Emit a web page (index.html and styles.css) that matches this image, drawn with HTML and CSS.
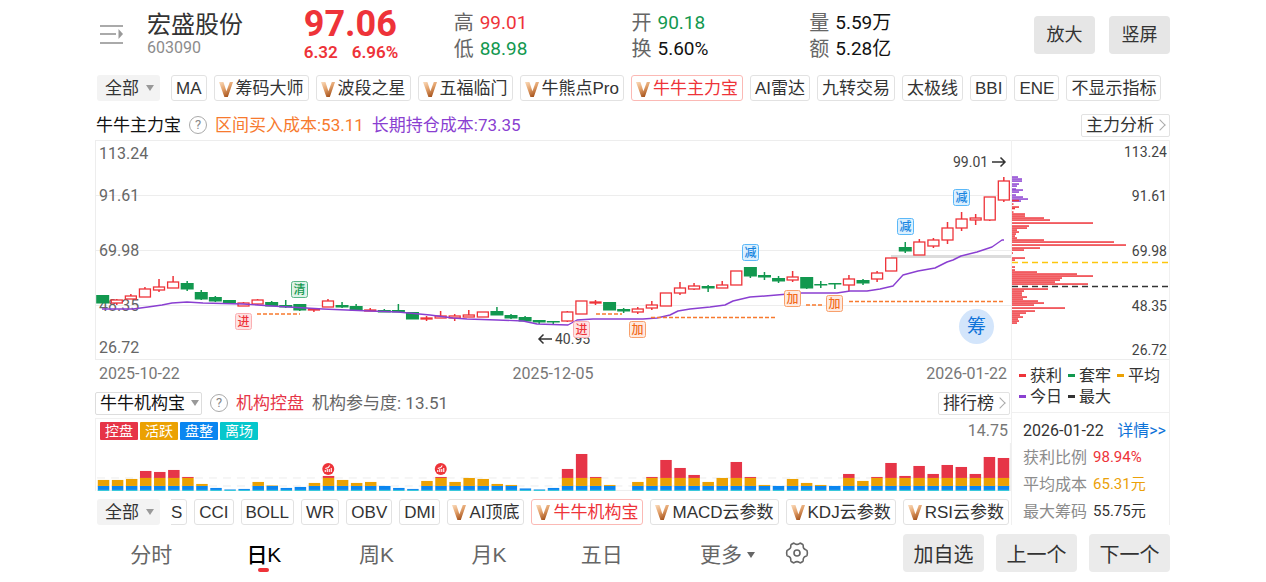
FILE: index.html
```html
<!DOCTYPE html>
<html lang="zh-CN">
<head>
    <meta charset="UTF-8">
    <meta name="viewport" content="width=device-width, initial-scale=1.0">
    <title>宏盛股份 603090</title>
    <link rel="stylesheet" href="styles.css">
</head>
<body>
    <svg class="defs" width="0" height="0" aria-hidden="true">
        <defs>
            <linearGradient id="gold" x1="0" y1="0" x2="0.5" y2="1">
                <stop offset="0" stop-color="#fbdcbc"/>
                <stop offset="0.5" stop-color="#e3a26c"/>
                <stop offset="1" stop-color="#a8561f"/>
            </linearGradient>
            <symbol id="vip" viewBox="0 0 14 15">
                <path d="M0 0h4.4l3 9.2L10.8 0H14L8.8 15H5.4z" fill="url(#gold)"/>
            </symbol>
        </defs>
    </svg>

    <div class="page">
        <header class="header">
            <button class="menu-button" aria-label="列表">
                <svg width="24" height="20" viewBox="0 0 24 20" stroke="#aaa" stroke-width="2">
                    <path d="M0 2h23M0 10h16M0 19h23"/>
                    <path d="M18.5 5v10l4.500-5z" fill="#999" stroke="none"/>
                </svg>
            </button>
            <div class="stock">
                <h1>宏盛股份</h1>
                <p>603090</p>
            </div>
            <div class="price">
                <strong>97.06</strong>
                <p><span>6.32</span><span>6.96%</span></p>
            </div>
            <dl class="stats">
                <div><dt>高</dt><dd class="up">99.01</dd></div>
                <div><dt>低</dt><dd class="down">88.98</dd></div>
            </dl>
            <dl class="stats">
                <div><dt>开</dt><dd class="down">90.18</dd></div>
                <div><dt>换</dt><dd>5.60%</dd></div>
            </dl>
            <dl class="stats">
                <div><dt>量</dt><dd>5.59万</dd></div>
                <div><dt>额</dt><dd>5.28亿</dd></div>
            </dl>
            <div class="header-buttons">
                <button>放大</button>
                <button>竖屏</button>
            </div>
        </header>

        <div class="chips">
            <span class="select all"><select aria-label="主图指标分类"><option>全部</option></select></span>
            <div class="chip-list">
                <button class="chip">MA</button>
                <button class="chip"><svg><use href="#vip"/></svg>筹码大师</button>
                <button class="chip"><svg><use href="#vip"/></svg>波段之星</button>
                <button class="chip"><svg><use href="#vip"/></svg>五福临门</button>
                <button class="chip"><svg><use href="#vip"/></svg>牛熊点Pro</button>
                <button class="chip active"><svg><use href="#vip"/></svg>牛牛主力宝</button>
                <button class="chip">AI雷达</button>
                <button class="chip">九转交易</button>
                <button class="chip">太极线</button>
                <button class="chip">BBI</button>
                <button class="chip">ENE</button>
                <button class="chip">不显示指标</button>
            </div>
        </div>

        <div class="title-row">
            <span class="name">牛牛主力宝</span>
            <button class="help" aria-label="牛牛主力宝说明">?</button>
            <span class="orange">区间买入成本:53.11</span>
            <span class="purple">长期持仓成本:73.35</span>
            <a class="more-link" href="#">主力分析<i></i></a>
        </div>

        <main class="board">
            <section class="left">
                <div class="kline">
                    <svg id="kline" viewBox="-1 0 916 220"></svg>
                    <button class="chip-toggle">筹</button>
                </div>
                <div class="dates">
                    <time>2025-10-22</time>
                    <time>2025-12-05</time>
                    <time>2026-01-22</time>
                </div>

                <div class="sub-row">
                    <span class="select boxed"><select aria-label="副图指标"><option>牛牛机构宝</option></select></span>
                    <button class="help" aria-label="牛牛机构宝说明">?</button>
                    <span class="crimson">机构控盘</span>
                    <span class="grey">机构参与度: 13.51</span>
                    <a class="more-link" href="#">排行榜<i></i></a>
                </div>
                <div class="sub-chart">
                    <div class="sub-head">
                        <span class="tag tag-red">控盘</span>
                        <span class="tag tag-orange">活跃</span>
                        <span class="tag tag-blue">盘整</span>
                        <span class="tag tag-cyan">离场</span>
                        <span class="sub-max">14.75</span>
                    </div>
                    <svg id="volume" viewBox="-1 0 916 48"></svg>
                </div>

                <div class="chips bottom-chips">
                    <span class="select all"><select aria-label="副图指标分类"><option>全部</option></select></span>
                    <div class="chip-list scrolled">
                        <button class="chip">BIAS</button>
                        <button class="chip">CCI</button>
                        <button class="chip">BOLL</button>
                        <button class="chip">WR</button>
                        <button class="chip">OBV</button>
                        <button class="chip">DMI</button>
                        <button class="chip"><svg><use href="#vip"/></svg>AI顶底</button>
                        <button class="chip active"><svg><use href="#vip"/></svg>牛牛机构宝</button>
                        <button class="chip"><svg><use href="#vip"/></svg>MACD云参数</button>
                        <button class="chip"><svg><use href="#vip"/></svg>KDJ云参数</button>
                        <button class="chip"><svg><use href="#vip"/></svg>RSI云参数</button>
                    </div>
                </div>
            </section>

            <aside class="side">
                <svg id="cost" viewBox="0 0 157 220"></svg>
                <ul class="legend">
                    <li class="c-red">获利</li>
                    <li class="c-green">套牢</li>
                    <li class="c-orange">平均</li>
                    <li class="c-purple">今日</li>
                    <li class="c-black">最大</li>
                </ul>
                <div class="detail">
                    <p class="spread"><time>2026-01-22</time><a href="#">详情&gt;&gt;</a></p>
                    <p><span>获利比例</span><b class="up">98.94%</b></p>
                    <p><span>平均成本</span><b class="amber">65.31元</b></p>
                    <p><span>最大筹码</span><b>55.75元</b></p>
                </div>
            </aside>
        </main>

        <footer class="footer">
            <nav class="tabs">
                <button>分时</button>
                <button class="current">日K</button>
                <button>周K</button>
                <button>月K</button>
                <button>五日</button>
            </nav>
            <button class="more">更多<i></i></button>
            <button class="gear" aria-label="设置">
                <svg width="24" height="24" viewBox="0 0 24 24" fill="none" stroke="#666" stroke-width="1.6" stroke-linejoin="round">
                    <path d="M8.4 2.2C9.4 1.8 9.8 3.4 12 3.4s2.600-1.600 3.600-1.200l2.200 1.300c1 .8-.2 2 .9 3.700 1 1.600 2.900 1.300 3.300 2.400.4 1.300.4 3.500 0 4.800-.4 1.100-2.300.8-3.300 2.400-1.100 1.700.1 2.900-.9 3.700l-2.200 1.300c-1 .4-1.400-1.200-3.600-1.200s-2.600 1.600-3.600 1.200l-2.200-1.300c-1-.8.2-2-.9-3.700-1-1.600-2.900-1.300-3.300-2.400-.4-1.300-.4-3.500 0-4.800.4-1.100 2.300-.8 3.300-2.400 1.100-1.700-.1-2.900.9-3.700z"/>
                    <circle cx="12" cy="12" r="3"/>
                </svg>
            </button>
            <div class="actions">
                <button>加自选</button>
                <button>上一个</button>
                <button>下一个</button>
            </div>
        </footer>
    </div>

    <script src="script.js"></script>
</body>
</html>
```
FILE: styles.css
```css
* {
    box-sizing: border-box;
}
body {
    margin: 0;
    background: #fff;
    color: #333;
    font-family: Roboto, "Noto Sans CJK SC", sans-serif;
    font-size: 17px;
    line-height: 24px;
}
h1, p, dl, dd, ul {
    margin: 0;
    padding: 0;
}
button, select {
    margin: 0;
    padding: 0;
    border: none;
    background: none;
    color: inherit;
    font: inherit;
    cursor: pointer;
}
a {
    color: inherit;
    text-decoration: none;
}
svg {
    display: block;
}
.defs {
    position: absolute;
}
.page {
    padding: 0 96px 0 95px;
}
.up { color: #ee3339; }
.down { color: #12984f; }
.orange { color: #f77a2e; }
.purple { color: #8a3fd1; }
.crimson { color: #e63547; }
.grey { color: #666; }
.amber { color: #eba10a; }

/* header */
.header {
    display: grid;
    grid-template-columns: 52px 157fr 150fr 178fr 178fr 225fr auto;
    height: 75px;
}
.menu-button {
    align-self: start;
    padding: 24px 0 0 5px;
}
.stock {
    padding-top: 10px;
}
.stock h1 {
    font-size: 24px;
    font-weight: 400;
    line-height: 30px;
}
.stock p {
    color: #8c8c8c;
    font-size: 16px;
    line-height: 16px;
}
.price {
    padding-top: 6px;
    color: #ee3339;
}
.price strong {
    display: block;
    font-size: 36px;
    line-height: 36px;
}
.price p {
    display: flex;
    gap: 14px;
    font-weight: 600;
    line-height: 20px;
}
.stats {
    padding-top: 10px;
}
.stats div {
    display: flex;
    gap: 6px;
    font-size: 19px;
    line-height: 26px;
}
.stats dt {
    color: #666;
    font-size: 20px;
}
.stats dd {
    color: #111;
}
.stats .up { color: #ee3339; }
.stats .down { color: #12984f; }
.header-buttons {
    display: flex;
    align-items: flex-start;
    gap: 14px;
    padding-top: 16px;
}
.header-buttons button {
    width: 61px;
    height: 38px;
    border-radius: 4px;
    background: #e6e6e6;
    font-size: 18px;
}

/* indicator chips */
.chips {
    display: flex;
    gap: 11px;
    padding-left: 2px;
}
.chip-list {
    display: flex;
    flex: 1;
    gap: 7px;
    min-width: 0;
    overflow: hidden;
    font-family: "Liberation Sans", "Noto Sans CJK SC", sans-serif;
}
.chip-list.scrolled {
    justify-content: flex-end;
    padding-right: 2px;
}
.chip {
    display: flex;
    flex-shrink: 0;
    align-items: center;
    height: 26px;
    padding: 2px 4px 0;
    border: 1px solid #e2e2e2;
    border-radius: 3px;
    white-space: nowrap;
}
.chip svg {
    width: 14px;
    height: 15px;
    margin-right: 3px;
}
.chip.active {
    border-color: #fbb9b5;
    color: #ee3339;
}
.select {
    display: inline-flex;
    position: relative;
    align-items: center;
}
.select select {
    appearance: none;
    outline: none;
}
.select::after {
    content: "";
    position: absolute;
    right: 6px;
    border: 4px solid transparent;
    border-top: 6px solid #999;
    border-bottom: 0;
    pointer-events: none;
}
.all {
    height: 26px;
    border-radius: 3px;
    background: #f3f3f3;
}
.all select {
    padding: 0 21px 0 8px;
}
.boxed {
    height: 23px;
    border: 1px solid #ddd;
    border-radius: 2px;
    color: #111;
}
.boxed select {
    padding: 0 16px 0 4px;
}
.boxed::after {
    right: 2px;
}

/* title rows */
.title-row, .sub-row {
    display: flex;
    align-items: center;
    gap: 8px;
    height: 24px;
}
.title-row {
    margin: 12px 0 3px;
}
.name {
    padding-left: 1px;
    color: #111;
}
.help {
    width: 18px;
    height: 18px;
    border: 1px solid #aaa;
    border-radius: 50%;
    color: #888;
    font-size: 13px;
    line-height: 16px;
}
.more-link {
    display: flex;
    align-items: center;
    gap: 2px;
    height: 23px;
    margin-left: auto;
    padding: 0 5px 0 4px;
    border: 1px solid #e2e2e2;
    border-radius: 2px;
}
.more-link i {
    width: 8px;
    height: 8px;
    border: solid #aaa;
    border-width: 1px 1px 0 0;
    transform: rotate(45deg);
}

/* charts */
.board {
    display: grid;
    grid-template-columns: 916fr 159fr;
}
.left {
    min-width: 0;
}
.kline {
    position: relative;
}
.kline svg, .sub-chart svg, .side svg {
    width: 100%;
    height: auto;
}
.chip-toggle {
    position: absolute;
    right: 17px;
    bottom: 16px;
    width: 35px;
    height: 35px;
    border-radius: 50%;
    background: #d3e5fb;
    color: #0f73d8;
    font-size: 19px;
}
.axis {
    fill: #666;
    font-size: 16px;
}
.axis-small {
    fill: #444;
    font-size: 14px;
}
.mark {
    font-size: 12px;
    font-weight: 500;
    text-anchor: middle;
}
.dates {
    display: flex;
    justify-content: space-between;
    height: 31px;
    padding: 2px 4px 0;
    color: #777;
    font-size: 16px;
}
.sub-row {
    padding-right: 1px;
}
.sub-chart {
    margin-top: 3px;
    border: solid #f0f0f0;
    border-width: 1px 0 0 1px;
}
.sub-head {
    display: flex;
    align-items: center;
    gap: 2px;
    height: 24px;
    padding: 0 3px 0 4px;
}
.tag {
    padding: 0 5px;
    border-radius: 1px;
    color: #fff;
    font-size: 14px;
    line-height: 18px;
}
.tag-red { background: #e63547; }
.tag-orange { background: #eba103; }
.tag-blue { background: #0a86f0; }
.tag-cyan { background: #06c7cc; }
.sub-max {
    margin-left: auto;
    color: #777;
    font-size: 16px;
}
.bottom-chips {
    margin-top: 8px;
}

/* cost side panel */
.side {
    border-right: 1px solid #f0f0f0;
    border-left: 1px solid #f0f0f0;
    font-size: 16px;
}
.legend {
    display: grid;
    grid-template-columns: repeat(3, 49px);
    padding: 5px 0 5px 7px;
    border-bottom: 1px solid #f0f0f0;
    line-height: 21px;
    list-style: none;
}
.legend li {
    display: flex;
    align-items: center;
    gap: 4px;
    white-space: nowrap;
}
.legend li::before {
    content: "";
    width: 7px;
    height: 3px;
    background: #333;
}
.legend .c-red::before { background: #ee3339; }
.legend .c-green::before { background: #12984f; }
.legend .c-orange::before { background: #eba103; }
.legend .c-purple::before { background: #8a3fd1; }
.detail {
    padding: 4px 3px 0 11px;
    line-height: 27px;
}
.detail p {
    display: flex;
    gap: 6px;
}
.detail .spread {
    justify-content: space-between;
}
.detail a {
    color: #0f73d8;
}
.detail span {
    color: #8c8c8c;
}
.detail b {
    font-size: 15px;
    font-weight: 400;
}

/* bottom bar */
.footer {
    display: flex;
    align-items: center;
    margin-top: 9px;
    color: #666;
    font-family: "Liberation Sans", "Noto Sans CJK SC", sans-serif;
    font-size: 21px;
}
.tabs {
    display: grid;
    flex: 1;
    grid-template-columns: repeat(5, 1fr);
}
.tabs button {
    height: 38px;
    padding-top: 3px;
}
.tabs .current {
    position: relative;
    color: #000;
    font-weight: 500;
}
.current::after {
    content: "";
    position: absolute;
    bottom: 0;
    left: 50%;
    width: 11px;
    height: 4px;
    margin-left: -6px;
    border-radius: 2px;
    background: #ee3339;
}
.more {
    display: flex;
    align-items: center;
    gap: 5px;
    margin-left: 42px;
    padding-top: 3px;
}
.more i {
    border: 4px solid transparent;
    border-top: 6px solid #666;
    border-bottom: 0;
}
.gear {
    margin: 0 94px 0 30px;
}
.actions {
    display: flex;
    gap: 12px;
}
.actions button {
    width: 81px;
    height: 38px;
    padding-top: 3px;
    border-radius: 4px;
    background: #ebebeb;
    color: #333;
    font-size: 20px;
}
```
FILE: script.js
```javascript
const RED = "#ee3339";
const GREEN = "#12984f";
const STEP = 14.08;
const centre = i => 6.7 + STEP * i;

// [colour, body top, body bottom, high, low]
const candles = [
    ["g",155,163,155,163],["r",160,163,159,165],["r",156,159,154,159],["r",149,157,147,157],
    ["r",147,150,139,152],["r",142,148,136,148],["g",143,149,141,151],["g",152,159,150,160],
    ["g",157,161,156,162],["g",160,163,160,163],["r",163,166,162,166],["r",160,164,159,165],
    ["g",162,166,161,166],["g",165,167,160,168],["g",164,170,164,171],["r",169,170,169,172],
    ["r",161,167,159,167],["g",165,167,162,168],["g",166,170,164,170],["r",170,171,168,171],
    ["g",170,172,169,172],["g",170,172,164,172],["g",172,179,172,179],["r",178,179,176,181],
    ["r",176,178,171,178],["r",176,178,174,181],["r",175,177,170,177],["r",172,177,172,177],
    ["g",171,175,167,175],["g",175,178,174,179],["g",177,181,176,181],["g",180,182,180,184],
    ["g",181,182,181,184],["r",172,181,171,182],["r",161,174,161,174],["r",162,163,160,165],
    ["g",162,170,162,170],["g",169,171,168,173],["r",169,172,167,174],["r",165,168,161,170],
    ["r",153,166,153,166],["r",148,153,142,155],["r",146,149,143,150],["g",146,148,145,152],
    ["r",145,148,141,148],["r",131,145,131,145],["g",127,136,127,138],["g",135,137,132,140],
    ["g",138,141,136,143],["r",137,140,131,142],["g",137,148,137,149],["g",144,145,141,148],
    ["g",143,144,143,149],["r",139,145,135,151],["g",140,143,139,145],["r",133,139,131,142],
    ["r",118,131,118,131],["g",107,111,102,113],["r",102,115,99,115],["r",100,106,98,108],
    ["r",88,100,82,104],["r",79,88,72,91],["r",78,80,74,85],["r",57,80,57,81],["r",41,60,37,62]
];

const costLine = "6,169 37,169 52,167 66,165 76,163 91,162 107,163 147,164 176,166 227,169 274,171 302,172 " +
    "334,175 357,178 371,179 401,180 427,181 441,184 472,185 481,180 497,179 547,179 561,178 574,175 582,171 " +
    "594,169 614,167 629,165 637,161 654,157 669,156 704,153 741,153 754,151 771,151 784,149 797,146 807,135 " +
    "822,131 839,128 851,122 857,120 865,116 881,112 896,107 906,100 908,100";

// [x1, x2, y]
const rangeCost = [[161,204,174],[500,526,174],[555,681,177.5],[710,726,165],[753,908,161.5]];

// [text, left, top, line colour, fill, text colour]
const marks = [
    ["进",139,173,"#fbb0b3","#fde3e4",RED],
    ["清",195,141,"#58b787","#ddf2e7",GREEN],
    ["进",477,181,"#fbb0b3","#fde3e4",RED],
    ["加",533,181,"#f8a06c","#feeadf","#f26a1b"],
    ["减",646,104,"#5bb8f8","#dcf0fe","#1583e0"],
    ["加",688,150,"#f8a06c","#feeadf","#f26a1b"],
    ["加",730,155,"#f8a06c","#feeadf","#f26a1b"],
    ["减",801,78,"#5bb8f8","#dcf0fe","#1583e0"],
    ["减",857,49,"#5bb8f8","#dcf0fe","#1583e0"]
];

const scale = [["113.24",19],["91.61",61],["69.98",116],["48.35",171],["26.72",213]];

function drawKline() {
    let out = `<path d="M0 .5H915M0 55.500H915M0 110.500H915M0 165.500H915M0 219.500H915M-.5 0V220" fill="none" stroke="#ededed"/>`;
    out += `<rect x="795" y="115" width="120" height="3" fill="#dcdcdc"/>`;
    scale.forEach(([t, y]) => out += `<text class="axis" x="3" y="${y}">${t}</text>`);
    candles.forEach(([c, top, bottom, high, low], i) => {
        const x = centre(i);
        const color = c === "r" ? RED : GREEN;
        const h = Math.max(bottom - top, 1);
        out += `<path d="M${x} ${high}V${top}M${x} ${bottom}V${low}" stroke="${color}" stroke-width="1.5"/>`;
        if (c === "r") {
            out += `<rect x="${x - 5.5}" y="${top}" width="11" height="${h}" fill="#fff" stroke="${RED}" stroke-width="1.3"/>`;
        } else {
            out += `<rect x="${x - 6.5}" y="${top}" width="13" height="${h + 0.5}" fill="${GREEN}"/>`;
        }
    });
    out += `<polyline points="${costLine}" fill="none" stroke="#8a3fd1" stroke-width="1.4" stroke-linejoin="round"/>`;
    rangeCost.forEach(([a, b, y]) => {
        out += `<path d="M${a} ${y}H${b}" stroke="#f77a2e" stroke-width="1.4" stroke-dasharray="4 2"/>`;
    });
    out += `<text class="axis-small" x="459" y="204">40.95</text><text class="axis-small" x="857" y="27">99.01</text>`;
    out += `<path d="M456 199H443M447.500 194.500L443 199l4.500 4.500M896 22H909M904.500 17.500L909 22l-4.500 4.500" fill="none" stroke="#333" stroke-width="1.5"/>`;
    marks.forEach(([t, x, y, line, fill, color]) => {
        out += `<rect x="${x + 0.5}" y="${y + 0.5}" width="16" height="16" rx="2" fill="${fill}" stroke="${line}"/>`;
        out += `<text class="mark" x="${x + 8.5}" y="${y + 13}" fill="${color}">${t}</text>`;
    });
    document.getElementById("kline").innerHTML = out;
}

// total bar heights, stacked as cyan / blue / orange / red
const volumes = [
    11,11,12,20,19,21,14,7,3,1.5,2,9,5.5,3,4,8,15,11,8,9,5,3,2,10,14,9,13,12,7,6,2.5,1.5,3,
    22,37,14,6,0,9,14,31,23,16,9,13,29,14,6,5,12,8,6,5,17,10,14,28,15,25,17,26,24,17,34,33
];
const layers = [[0,1,"#2fc6da"],[1,5,"#0a86f0"],[5,13,"#eba103"],[13,48,"#e63547"]];

function drawVolume() {
    let out = `<path d="M0 35H915M0 43H915" stroke="#ececec" stroke-dasharray="8 6"/><path d="M0 47.500H915M914.500 0V48" stroke="#ededed"/>`;
    volumes.forEach((v, i) => {
        layers.forEach(([from, to, color]) => {
            if (v > from) {
                const end = Math.min(v, to);
                out += `<rect x="${centre(i) - 6}" y="${48 - end}" width="11.5" height="${end - from}" fill="${color}"/>`;
            }
        });
    });
    [16, 24].forEach(i => {
        const x = centre(i) - 0.5;
        out += `<circle cx="${x}" cy="26" r="6" fill="${RED}"/>`;
        out += `<path d="M${x - 3} 29v-2M${x - 1} 29v-3M${x + 1} 29v-3M${x + 3} 29v-4M${x - 3} 25.500l3-1 1.500-2" fill="none" stroke="#fff" stroke-width="1.1"/>`;
    });
    document.getElementById("volume").innerHTML = out;
}

// [y, width]
const todayBars = [[37,6],[39,10],[41,10],[44,7],[46,5],[49,4],[50,11],[52,7],[55,4],[57,11],[59,16],[61,9]];
const profitBars = [
    [60.5,7],[64,1.5],[67,7],[68.5,3],[72,1.5],[74,13],[76,13],[78,32],[80,38],[83,81],[86,17],[88,15],[90,5],
    [92,7],[94,4],[96,3],[98,5],[100,32],[102,102],[105,114],[108,28],[110,12],[113,1],[118,13],[120,3],
    [127,3],[130,3],[132,25],[134,65],[136,81],[138,50],[140,48],[142,43],[144,76],[149,36],[151,12],
    [153,10],[155,10],[157,15],[159,11],[161,26],[163,32],[165,22],[168,53],[171,23],[173,14],[175,8],
    [177,11],[179,6],[181,7],[183,5]
];
const costScale = [["113.24",17],["91.61",61],["69.98",116],["48.35",171],["26.72",215]];

function drawCost() {
    let out = `<path d="M0 .5H157M0 219.500H157" stroke="#ededed"/>`;
    const bars = (list, color) => list.forEach(([y, w]) => {
        out += `<rect x="0" y="${y - 0.7}" width="${w}" height="1.500" fill="${color}"/>`;
    });
    bars(todayBars, "#8a3fd1");
    bars(profitBars, RED);
    out += `<path d="M0 122.500H157" stroke="#fcc60c" stroke-width="1.500" stroke-dasharray="6 4"/>`;
    out += `<path d="M0 146.500H157" stroke="#333" stroke-width="1.500" stroke-dasharray="6 4"/>`;
    costScale.forEach(([t, y]) => out += `<text class="axis-small" x="155" y="${y}" text-anchor="end">${t}</text>`);
    document.getElementById("cost").innerHTML = out;
}

drawKline();
drawVolume();
drawCost();
```
